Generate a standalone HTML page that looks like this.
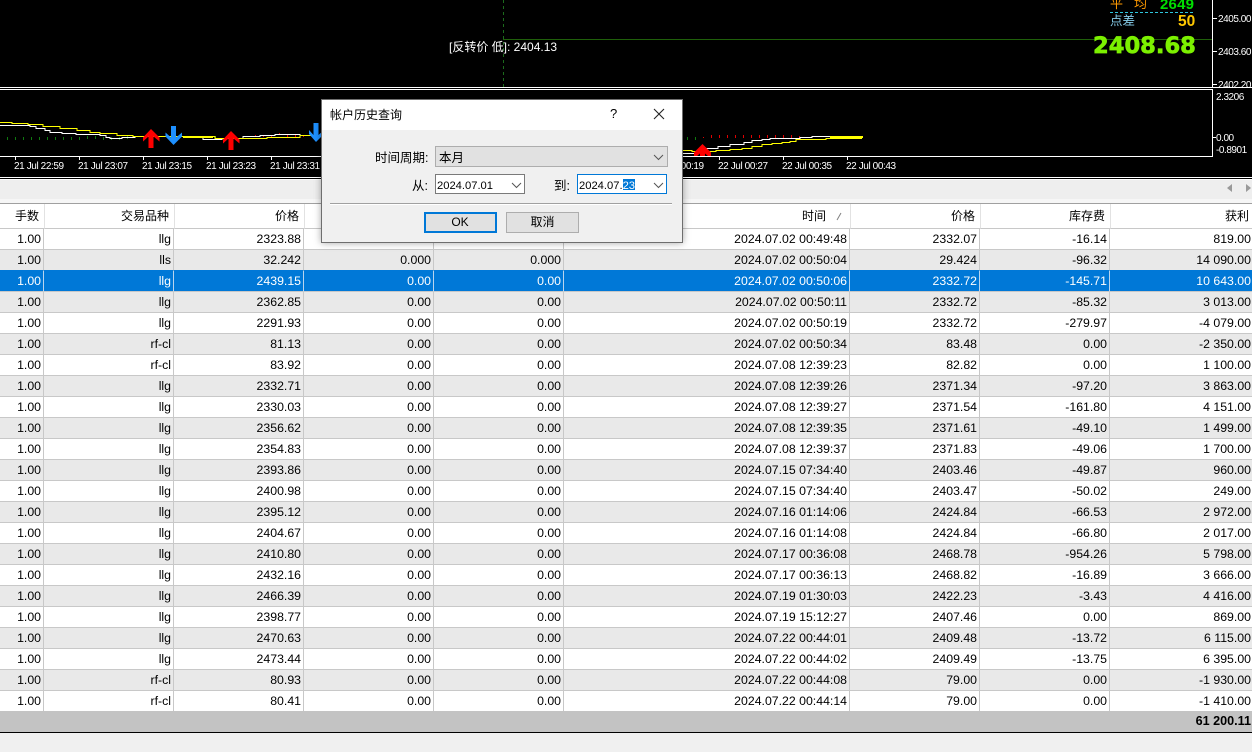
<!DOCTYPE html>
<html><head><meta charset="utf-8"><title>帐户历史查询</title>
<style>
html,body{margin:0;padding:0;width:1252px;height:752px;overflow:hidden;background:#f0f0f0}
body{position:relative;font-family:"Liberation Sans","Noto Sans CJK SC",sans-serif;font-size:12.3px;color:#000}
.a{position:absolute;white-space:nowrap}
#chart{position:absolute;left:0;top:0;width:1252px;height:180px;background:#000}
.xl,.yl{position:absolute;color:#fff;font-size:10px;line-height:12px;white-space:nowrap}
.xl{letter-spacing:-.4px}
.yl{letter-spacing:-.45px}
table{border-collapse:separate;border-spacing:0;table-layout:fixed;position:absolute;left:0;width:1252px}
#hd{top:204px;background:#fff}
#hd td{padding:0 5px 2px 0;text-align:right;border-right:1px solid #e2e2e2;border-bottom:1px solid #c8c8c8;font-size:12px;box-sizing:content-box;height:22px}
#bd{top:229px;background:#fff}
#bd td{height:20px;padding:0 2px 0 0;text-align:right;border-right:1px solid #c8c8c8;border-bottom:1px solid #c8c8c8;line-height:20px;overflow:hidden;white-space:nowrap}
#bd td:last-child,#hd td:last-child{border-right:0;padding-right:1px}
#hd td:last-child{padding-right:3px}
#bd tr:nth-child(even) td{background:#e9e9e9}
#bd tr:nth-child(2) td{border-bottom-color:#0078d7}
#bd tr.s td{background:#0078d7;color:#fff;border-right-color:#b9d4ee}
#dlg{position:absolute;left:321px;top:99px;width:360px;height:142px;background:#f0f0f0;border:1px solid #6e6e6e;box-shadow:0 0 7px rgba(0,0,0,.35)}
#tt{position:absolute;left:0;top:0;width:360px;height:30px;background:#fff}
.box{position:absolute;box-sizing:border-box}
.btn{position:absolute;box-sizing:border-box;background:#e1e1e1;text-align:center;font-size:12px}
</style></head><body>
<div id="chart">
<svg width="1252" height="180" style="position:absolute;left:0;top:0" shape-rendering="crispEdges">
<line x1="503.5" y1="0" x2="503.5" y2="87" stroke="#1c6a1c" stroke-dasharray="3 3"/>
<line x1="503" y1="39.5" x2="1212" y2="39.5" stroke="#1f5f0a"/>
<line x1="0" y1="87.5" x2="1252" y2="87.5" stroke="#fff"/>
<line x1="0" y1="89.5" x2="1212" y2="89.5" stroke="#fff"/>
<line x1="1212.5" y1="0" x2="1212.5" y2="87" stroke="#fff"/>
<line x1="1212.5" y1="89" x2="1212.5" y2="157" stroke="#fff"/>
<line x1="0" y1="156.5" x2="1212" y2="156.5" stroke="#fff"/>
<line x1="0" y1="177.5" x2="1252" y2="177.5" stroke="#fff"/>
<line x1="0" y1="179.5" x2="1252" y2="179.5" stroke="#fff"/>
<path d="M1213 18.5h4M1213 51.5h4M1213 84.5h4M1213 137.5h3M15.5 157v3M79.5 157v3M143.5 157v3M207.5 157v3M271.5 157v3M335.5 157v3M719.5 157v3M783.5 157v3M847.5 157v3" stroke="#fff"/>
<path d="M7.5 137v3M15.5 137v3M23.5 137v3M31.5 137v3M39.5 137v3M47.5 137v3M55.5 137v3M63.5 137v3M71.5 137v3M79.5 137v3M87.5 136v3M95.5 136v3M103.5 137v3M111.5 137v3M119.5 137v3M127.5 136v3M199.5 136v2M207.5 136v2M215.5 136v2M687.5 137v3M695.5 137v3" stroke="#0f7a0f"/>
<path d="M255.5 135v2M263.5 135v2M271.5 135v2M279.5 133v2M287.5 135v2M295.5 135v2M303.5 135v2M703.5 137v1M711.5 135v3M719.5 135v3M727.5 135v3M735.5 135v3M743.5 135v3M751.5 135v3M759.5 135v3M767.5 135v3M775.5 135v3M783.5 135v3M791.5 135v3M799.5 136v2M839.5 137v1M847.5 137v1M855.5 137v1" stroke="#e00000"/>
<g fill="none" stroke="#fff" stroke-width="1">
<path d="M0 125.5H30V126.5H36V128.5H45V130.5H50V132.5H62V133.5H76V134.5H100V135.5H106V137.5H110V138.5H122V137.5H135V136.5H190V137.5H203V139.5H222V138.5H243V136.5H260V135.5H275V134.5H300V135.5H315"/>
<path d="M682 153.5H698V151.5H706V148.5H718V146.5H730V144.5H744V142.5H752V140.5H762V139.5H770V138.5H800V137.5H812V136.5H862"/>
</g>
<g fill="none" stroke="#ff0" stroke-width="1">
<path d="M0 122.5H12V123.5H28V124.5H43V126.5H60V128.5H77V130.5H90V132.5H100V133.5H117V135.5H133V136.5H215V138.5H267V137.5H300V135.5H315"/>
<path d="M682 150.5H692V151.5H716V150.5H730V149.5H742V148.5H752V146.5H762V144.5H772V143.5H782V142.5H790V141.5H796V139.5H826V138.5H862"/>
</g>
<g stroke="none" shape-rendering="auto">
<path d="M830 136h33v2h-33zM183 136h30v2h-30z" fill="#ff0"/>
<path d="M151 129L159.5 137.5V141.5L153.5 136.5V148H148.5V136.5L143 141.5V137.5Z" fill="#f00"/>
<path d="M231 131L239.5 139.5V143.5L233.5 138.5V150H228.5V138.5L223 143.5V139.5Z" fill="#f00"/>
<path d="M702.5 144L711 152.5V156H708L705 153.5V156H700V153.5L697 156H694V152.5Z" fill="#f00"/>
<path d="M173.5 145L182 136.5V132.5L176 137.5V126H171V137.5L165.5 132.5V136.5Z" fill="#1e90ff"/>
<path d="M316 142L324 134V130L318.5 135V123H313.5V135L309 130V134Z" fill="#1e90ff"/>
</g>
<line x1="1110" y1="12.5" x2="1195" y2="12.5" stroke="#2ec4dc" stroke-dasharray="3 2"/>
</svg>
<div class="a" style="left:449px;top:40px;color:#fff;font-size:12px;line-height:15px">[反转价 低]: 2404.13</div>
<div class="a" style="left:1110px;top:-4px;color:#ff9a00;font-size:13px;line-height:15px;letter-spacing:0">平</div>
<div class="a" style="left:1134px;top:-4px;color:#ff9a00;font-size:13px;line-height:15px">均</div>
<div class="a" style="left:1160px;top:-3px;color:#00e000;font-size:15px;font-weight:bold;line-height:15px;letter-spacing:.2px">2649</div>
<div class="a" style="left:1110px;top:14px;color:#87ceeb;font-size:12.5px;line-height:15px">点差</div>
<div class="a" style="left:1178px;top:13px;color:#ffc800;font-size:15.5px;font-weight:bold;line-height:17px">50</div>
<div class="a" style="left:1093px;top:32px;color:#7cf000;font-family:'DejaVu Sans',sans-serif;font-size:22.6px;font-weight:bold;line-height:28px;-webkit-text-stroke:.7px #7cf000">2408.68</div>
<div class="yl" style="left:1218px;top:14px">2405.00</div>
<div class="yl" style="left:1218px;top:47px">2403.60</div>
<div class="yl" style="left:1218px;top:80px">2402.20</div>
<div class="yl" style="left:1216px;top:92px">2.3206</div>
<div class="yl" style="left:1216px;top:133px">0.00</div>
<div class="yl" style="left:1216px;top:145px">-0.8901</div>
<div class="xl" style="left:14px;top:161px">21 Jul 22:59</div>
<div class="xl" style="left:78px;top:161px">21 Jul 23:07</div>
<div class="xl" style="left:142px;top:161px">21 Jul 23:15</div>
<div class="xl" style="left:206px;top:161px">21 Jul 23:23</div>
<div class="xl" style="left:270px;top:161px">21 Jul 23:31</div>
<div class="xl" style="left:654px;top:161px">22 Jul 00:19</div>
<div class="xl" style="left:718px;top:161px">22 Jul 00:27</div>
<div class="xl" style="left:782px;top:161px">22 Jul 00:35</div>
<div class="xl" style="left:846px;top:161px">22 Jul 00:43</div>
</div>

<div class="a" style="left:0;top:180px;width:1252px;height:19px;background:#eee"></div>
<div class="a" style="left:0;top:199px;width:1252px;height:4px;background:#f6f6f6"></div>
<div class="a" style="left:0;top:203px;width:1252px;height:1px;background:#a0a0a0"></div>
<svg class="a" style="left:1225px;top:182px" width="28" height="12"><path d="M2 6L7 2V10Z" fill="#999"/><path d="M21 2L26 6L21 10Z" fill="#999"/></svg>

<table id="hd"><colgroup><col style="width:45px"><col style="width:130px"><col style="width:130px"><col style="width:130px"><col style="width:130px"><col style="width:286px"><col style="width:130px"><col style="width:130px"><col style="width:141px"></colgroup>
<tr><td>手数</td><td>交易品种</td><td>价格</td><td>止损</td><td>获利</td><td style="padding-right:24px">时间</td><td>价格</td><td>库存费</td><td>获利</td></tr></table>
<svg class="a" style="left:836px;top:212px" width="6" height="9"><path d="M1 8L5 1" stroke="#808080" fill="none"/></svg>

<table id="bd"><colgroup><col style="width:44px"><col style="width:130px"><col style="width:130px"><col style="width:130px"><col style="width:130px"><col style="width:286px"><col style="width:130px"><col style="width:130px"><col style="width:142px"></colgroup>
<tr><td>1.00</td><td>llg</td><td>2323.88</td><td>0.00</td><td>0.00</td><td>2024.07.02 00:49:48</td><td>2332.07</td><td>-16.14</td><td>819.00</td></tr>
<tr><td>1.00</td><td>lls</td><td>32.242</td><td>0.000</td><td>0.000</td><td>2024.07.02 00:50:04</td><td>29.424</td><td>-96.32</td><td>14 090.00</td></tr>
<tr class="s"><td>1.00</td><td>llg</td><td>2439.15</td><td>0.00</td><td>0.00</td><td>2024.07.02 00:50:06</td><td>2332.72</td><td>-145.71</td><td>10 643.00</td></tr>
<tr><td>1.00</td><td>llg</td><td>2362.85</td><td>0.00</td><td>0.00</td><td>2024.07.02 00:50:11</td><td>2332.72</td><td>-85.32</td><td>3 013.00</td></tr>
<tr><td>1.00</td><td>llg</td><td>2291.93</td><td>0.00</td><td>0.00</td><td>2024.07.02 00:50:19</td><td>2332.72</td><td>-279.97</td><td>-4 079.00</td></tr>
<tr><td>1.00</td><td>rf-cl</td><td>81.13</td><td>0.00</td><td>0.00</td><td>2024.07.02 00:50:34</td><td>83.48</td><td>0.00</td><td>-2 350.00</td></tr>
<tr><td>1.00</td><td>rf-cl</td><td>83.92</td><td>0.00</td><td>0.00</td><td>2024.07.08 12:39:23</td><td>82.82</td><td>0.00</td><td>1 100.00</td></tr>
<tr><td>1.00</td><td>llg</td><td>2332.71</td><td>0.00</td><td>0.00</td><td>2024.07.08 12:39:26</td><td>2371.34</td><td>-97.20</td><td>3 863.00</td></tr>
<tr><td>1.00</td><td>llg</td><td>2330.03</td><td>0.00</td><td>0.00</td><td>2024.07.08 12:39:27</td><td>2371.54</td><td>-161.80</td><td>4 151.00</td></tr>
<tr><td>1.00</td><td>llg</td><td>2356.62</td><td>0.00</td><td>0.00</td><td>2024.07.08 12:39:35</td><td>2371.61</td><td>-49.10</td><td>1 499.00</td></tr>
<tr><td>1.00</td><td>llg</td><td>2354.83</td><td>0.00</td><td>0.00</td><td>2024.07.08 12:39:37</td><td>2371.83</td><td>-49.06</td><td>1 700.00</td></tr>
<tr><td>1.00</td><td>llg</td><td>2393.86</td><td>0.00</td><td>0.00</td><td>2024.07.15 07:34:40</td><td>2403.46</td><td>-49.87</td><td>960.00</td></tr>
<tr><td>1.00</td><td>llg</td><td>2400.98</td><td>0.00</td><td>0.00</td><td>2024.07.15 07:34:40</td><td>2403.47</td><td>-50.02</td><td>249.00</td></tr>
<tr><td>1.00</td><td>llg</td><td>2395.12</td><td>0.00</td><td>0.00</td><td>2024.07.16 01:14:06</td><td>2424.84</td><td>-66.53</td><td>2 972.00</td></tr>
<tr><td>1.00</td><td>llg</td><td>2404.67</td><td>0.00</td><td>0.00</td><td>2024.07.16 01:14:08</td><td>2424.84</td><td>-66.80</td><td>2 017.00</td></tr>
<tr><td>1.00</td><td>llg</td><td>2410.80</td><td>0.00</td><td>0.00</td><td>2024.07.17 00:36:08</td><td>2468.78</td><td>-954.26</td><td>5 798.00</td></tr>
<tr><td>1.00</td><td>llg</td><td>2432.16</td><td>0.00</td><td>0.00</td><td>2024.07.17 00:36:13</td><td>2468.82</td><td>-16.89</td><td>3 666.00</td></tr>
<tr><td>1.00</td><td>llg</td><td>2466.39</td><td>0.00</td><td>0.00</td><td>2024.07.19 01:30:03</td><td>2422.23</td><td>-3.43</td><td>4 416.00</td></tr>
<tr><td>1.00</td><td>llg</td><td>2398.77</td><td>0.00</td><td>0.00</td><td>2024.07.19 15:12:27</td><td>2407.46</td><td>0.00</td><td>869.00</td></tr>
<tr><td>1.00</td><td>llg</td><td>2470.63</td><td>0.00</td><td>0.00</td><td>2024.07.22 00:44:01</td><td>2409.48</td><td>-13.72</td><td>6 115.00</td></tr>
<tr><td>1.00</td><td>llg</td><td>2473.44</td><td>0.00</td><td>0.00</td><td>2024.07.22 00:44:02</td><td>2409.49</td><td>-13.75</td><td>6 395.00</td></tr>
<tr><td>1.00</td><td>rf-cl</td><td>80.93</td><td>0.00</td><td>0.00</td><td>2024.07.22 00:44:08</td><td>79.00</td><td>0.00</td><td>-1 930.00</td></tr>
<tr><td>1.00</td><td>rf-cl</td><td>80.41</td><td>0.00</td><td>0.00</td><td>2024.07.22 00:44:14</td><td>79.00</td><td>0.00</td><td>-1 410.00</td></tr>
</table>

<div class="a" style="left:0;top:711px;width:1252px;height:21px;background:#c3c3c3;text-align:right;font-weight:bold;font-size:12.6px;line-height:21px"><span style="padding-right:1px">61 200.11</span></div>
<div class="a" style="left:0;top:732px;width:1252px;height:1px;background:#000"></div>
<div class="a" style="left:0;top:733px;width:1252px;height:19px;background:#f0f0f0"></div>

<div id="dlg">
<div id="tt"></div>
<div class="a" style="left:8px;top:7px;font-size:12px;line-height:16px">帐户历史查询</div>
<div class="a" style="left:288px;top:6px;font-size:13px;line-height:16px">?</div>
<svg class="a" style="left:331px;top:8px" width="12" height="12"><path d="M1 1L11 11M11 1L1 11" stroke="#222" stroke-width="1.1" fill="none"/></svg>
<div class="a" style="left:53px;top:50px;font-size:12.5px;line-height:16px">时间周期:</div>
<div class="box" style="left:113px;top:46px;width:233px;height:21px;background:#e1e1e1;border:1px solid #adadad"></div>
<div class="a" style="left:117px;top:50px;font-size:12.5px;line-height:16px">本月</div>
<svg class="a" style="left:331px;top:54px" width="11" height="7"><path d="M1 1L5.5 5.5L10 1" stroke="#555" fill="none"/></svg>
<div class="a" style="left:90px;top:78px;font-size:12.5px;line-height:16px">从:</div>
<div class="box" style="left:113px;top:74px;width:90px;height:20px;background:#fff;border:1px solid #7a7a7a"></div>
<div class="a" style="left:115px;top:79px;font-size:11.2px;line-height:15px">2024.07.01</div>
<svg class="a" style="left:189px;top:82px" width="11" height="7"><path d="M1 1L5.5 5.5L10 1" stroke="#555" fill="none"/></svg>
<div class="a" style="left:232px;top:78px;font-size:12.5px;line-height:16px">到:</div>
<div class="box" style="left:255px;top:74px;width:90px;height:20px;background:#fff;border:1px solid #0078d7"></div>
<div class="a" style="left:301px;top:79px;width:12px;height:11px;background:#0078d7"></div>
<div class="a" style="left:257px;top:79px;font-size:11.2px;line-height:15px">2024.07.<span style="color:#fff">23</span></div>
<svg class="a" style="left:331px;top:82px" width="11" height="7"><path d="M1 1L5.5 5.5L10 1" stroke="#555" fill="none"/></svg>
<div class="a" style="left:8px;top:103px;width:342px;height:1px;background:#a0a0a0"></div>
<div class="a" style="left:8px;top:104px;width:342px;height:1px;background:#fff"></div>
<div class="btn" style="left:101px;top:112px;width:73px;height:21px;border:2px solid #0078d7;line-height:17px;left:102px;text-indent:-1px">OK</div>
<div class="btn" style="left:184px;top:112px;width:73px;height:21px;border:1px solid #adadad;line-height:19px">取消</div>
</div>
</body></html>
